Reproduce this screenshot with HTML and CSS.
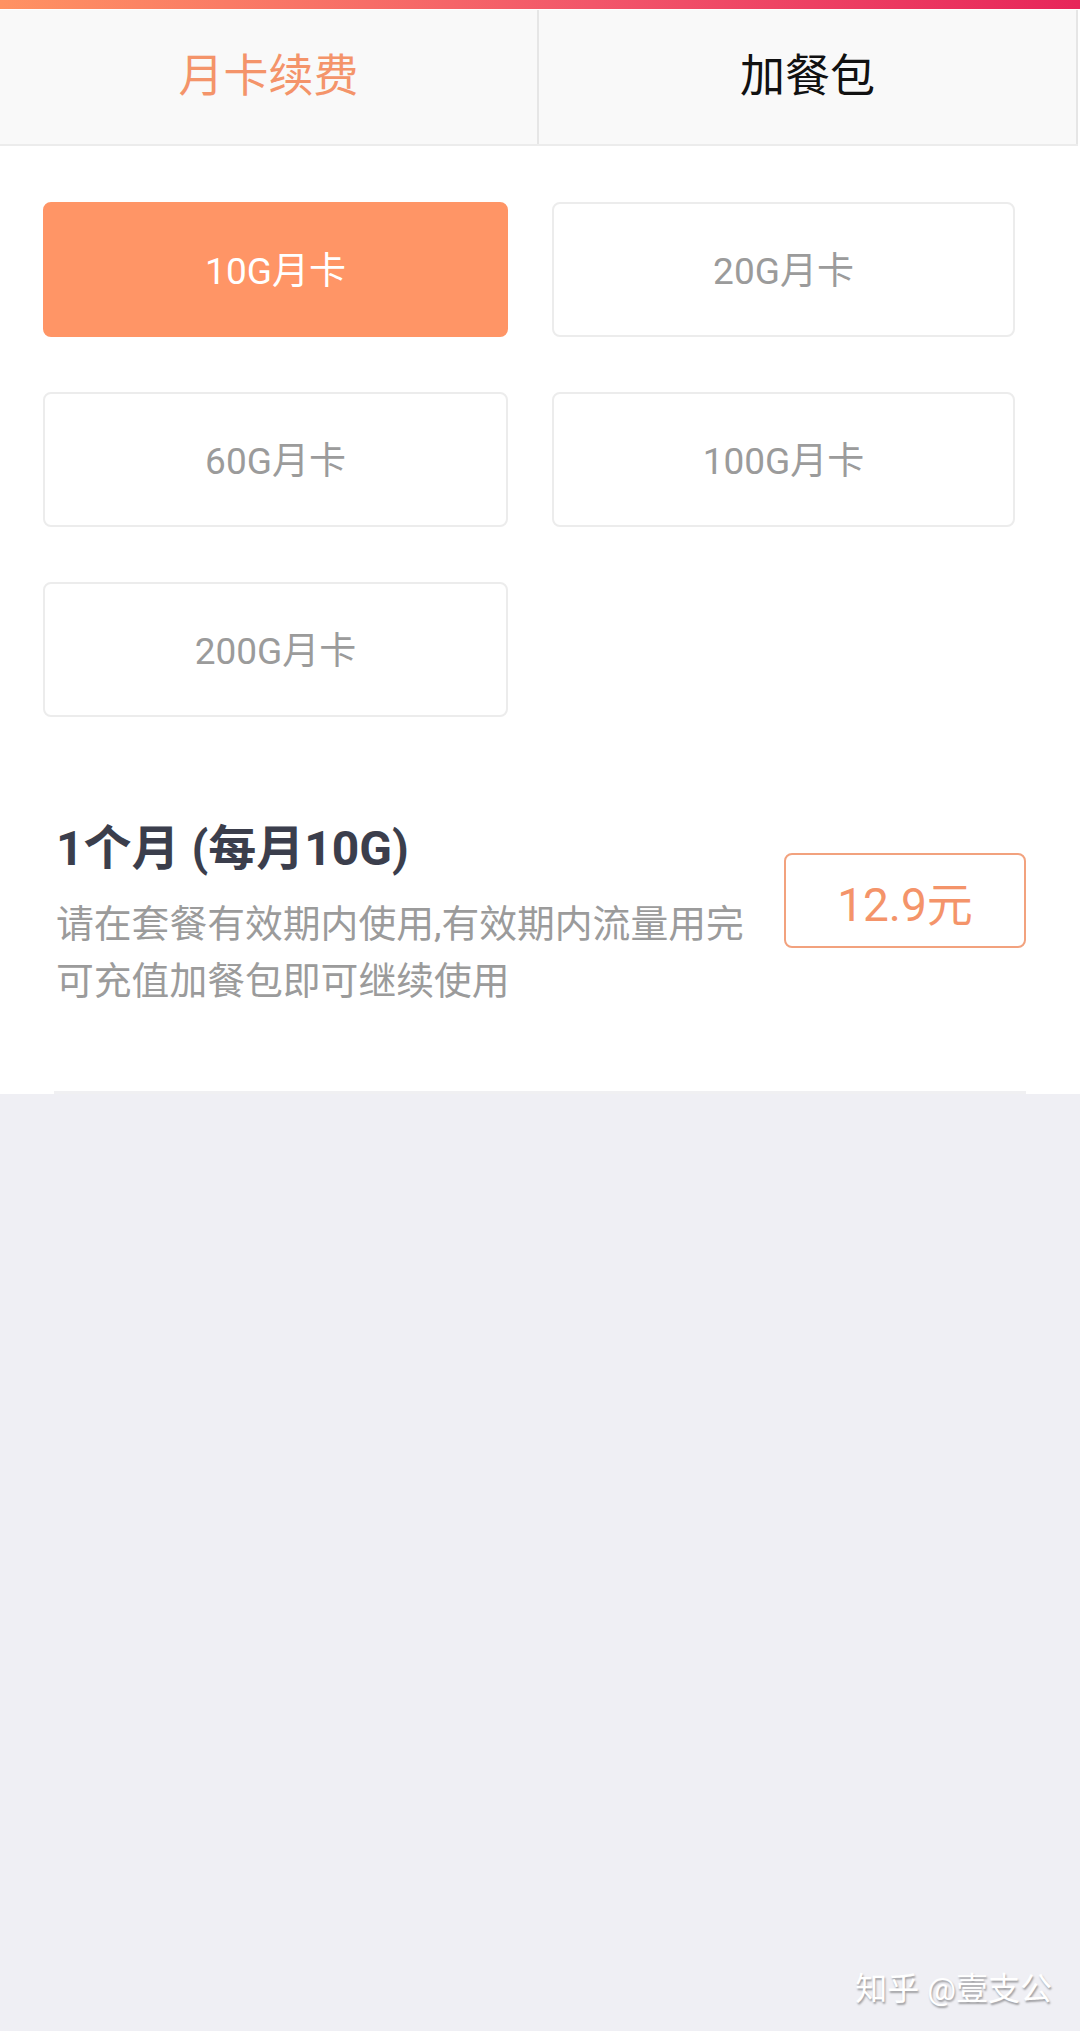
FILE: index.html
```html
<!DOCTYPE html>
<html lang="zh-CN">

<head>
    <meta charset="UTF-8">
    <meta name="viewport" content="width=device-width, initial-scale=1.0">
    <title>流量月卡</title>
    <link rel="stylesheet" href="styles.css">
</head>

<body>

    <div class="page">
        <div class="top-bar"></div>

        <div class="tabs">
            <div class="tab active">月卡续费</div>
            <div class="tab">加餐包</div>
        </div>

        <div class="plans">
            <div class="plan selected">10G月卡</div>
            <div class="plan">20G月卡</div>
            <div class="plan">60G月卡</div>
            <div class="plan">100G月卡</div>
            <div class="plan">200G月卡</div>
        </div>

        <div class="detail">
            <div class="detail-text">
                <h2>1个月 (每月10G)</h2>
                <p>请在套餐有效期内使用,有效期内流量用完可充值加餐包即可继续使用</p>
            </div>
            <div class="price">12.9元</div>
        </div>
    </div>

    <div class="watermark">知乎 @壹支公</div>

</body>

</html>
```

FILE: styles.css
```css
:root {
    --color-accent: #ff9566;
    --color-accent-text: #f4946a;
    --color-muted: #9b9b9b;
    --color-title: #3b3e4c;
    --color-border: #ececec;
    --color-page: #efeff4;
    --font-family: Roboto, "Noto Sans CJK SC", sans-serif;
}

html,
body {
    margin: 0;
    padding: 0;
}

body {
    font-family: var(--font-family);
    background-color: var(--color-page);
    min-height: 2031px;
    position: relative;
}

.page {
    background: #ffffff;
}

.top-bar {
    height: 9px;
    background: linear-gradient(to right, #ff9262, #f2566a 55%, #e7265a);
    margin-bottom: 1px;
}

.tabs {
    display: flex;
    height: 134px;
    border-bottom: 2px solid var(--color-border);
    margin-right: 2px;
}

.tab {
    flex: 1;
    display: flex;
    align-items: center;
    justify-content: center;
    padding-bottom: 10px;
    background: #f9f9f9;
    border-right: 2px solid #e6e6e6;
    font-size: 45px;
    color: #111111;
}

.tab.active {
    color: var(--color-accent-text);
}

.plans {
    display: grid;
    grid-template-columns: 465px 463px;
    column-gap: 44px;
    row-gap: 55px;
    padding: 56px 0 0 43px;
}

.plan {
    height: 131px;
    display: flex;
    align-items: center;
    justify-content: center;
    padding-bottom: 3px;
    box-sizing: border-box;
    height: 135px;
    border: 2px solid var(--color-border);
    border-radius: 8px;
    font-size: 37px;
    color: var(--color-muted);
}

.plan.selected {
    background: var(--color-accent);
    border-color: var(--color-accent);
    color: #ffffff;
}

.detail {
    display: flex;
    justify-content: space-between;
    align-items: flex-start;
    margin: 0 54px;
    padding: 102px 0 81px 2px;
    border-bottom: 3px solid #f0f0f2;
}

.detail-text {
    width: 700px;
}

.detail-text h2 {
    margin: 0;
    font-size: 48px;
    line-height: 60px;
    font-weight: 700;
    color: var(--color-title);
}

.detail-text p {
    margin: 17px 0 0;
    font-size: 37.8px;
    line-height: 57px;
    color: var(--color-muted);
}

.price {
    margin-top: 34px;
    width: 238px;
    height: 91px;
    display: flex;
    align-items: center;
    justify-content: center;
    border: 2px solid #f2a27e;
    border-radius: 8px;
    font-size: 46px;
    color: var(--color-accent-text);
}

.watermark {
    position: absolute;
    right: 28px;
    top: 1963px;
    font-size: 32px;
    color: #ffffff;
    text-shadow: 1px 2px 2px rgba(0, 0, 0, 0.35);
}
```
